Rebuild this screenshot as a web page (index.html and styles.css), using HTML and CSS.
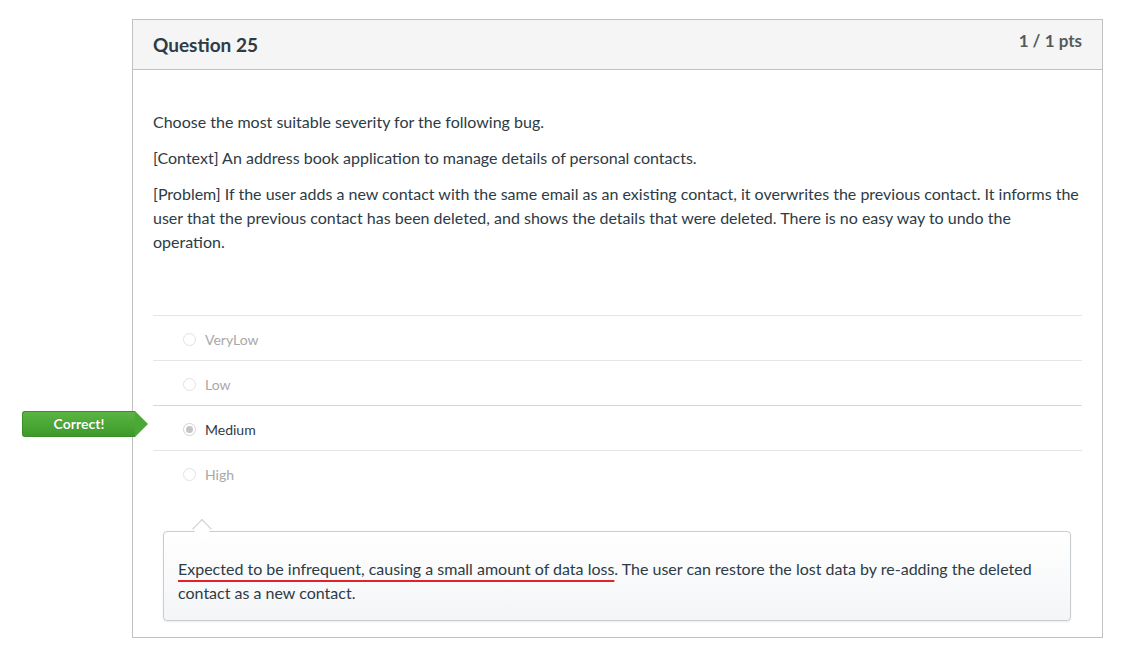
FILE: index.html
```html
<!DOCTYPE html>
<html>
<head>
<meta charset="utf-8">
<link rel="stylesheet" href="styles.css">
</head>
<body>
<div class="question">
  <div class="q-header">
    <h2 class="q-title">Question 25</h2>
    <div class="q-pts">1 / 1 pts</div>
  </div>
  <div class="q-body">
    <div class="q-text">
      <p>Choose the most suitable severity for the following bug.</p>
      <p>[Context] An address book application to manage details of personal contacts.</p>
      <p>[Problem] If the user adds a new contact with the same email as an existing contact, it overwrites the previous contact. It informs the user that the previous contact has been deleted, and shows the details that were deleted. There is no easy way to undo the operation.</p>
    </div>
    <div class="answers">
      <div class="answer"><span class="radio"></span><span class="label">VeryLow</span></div>
      <div class="answer"><span class="radio"></span><span class="label">Low</span></div>
      <div class="answer selected">
        <span class="badge">Correct!</span>
        <span class="radio checked"></span><span class="label">Medium</span>
      </div>
      <div class="answer"><span class="radio"></span><span class="label">High</span></div>
    </div>
    <div class="comment">
      <p><span class="mark">Expected to be infrequent, causing a small amount of data loss</span>. The user can restore the lost data by re-adding the deleted contact as a new contact.</p>
    </div>
  </div>
</div>
</body>
</html>
```

FILE: styles.css
```css
html, body {
  margin: 0;
  padding: 0;
  background: #fff;
}
body {
  font-family: Lato, "Open Sans", sans-serif;
  color: #2d3b45;
  padding: 19px 0 0 132px;
}
.question {
  width: 969px;
  border: 1px solid #c1c1c1;
  box-sizing: content-box;
}
.q-header {
  display: flex;
  justify-content: space-between;
  align-items: flex-start;
  background: #f5f5f5;
  border-bottom: 1px solid #c1c1c1;
  height: 49px;
  padding: 0 20px;
}
.q-title {
  margin: 0;
  padding-top: 13px;
  font-size: 19px;
  font-weight: 700;
  line-height: 24px;
  color: #2d3b45;
}
.q-pts {
  padding-top: 9px;
  font-size: 17px;
  font-weight: 700;
  line-height: 24px;
  color: #555a5e;
}
.q-body {
  padding: 40px 20px 16px 20px;
}
.q-text p {
  margin: 0 0 12px 0;
  font-size: 16px;
  line-height: 24px;
}
.answers {
  margin-top: 61px;
}
.answer {
  position: relative;
  display: flex;
  align-items: center;
  height: 42px;
  border-top: 1px solid #e5e5e5;
  padding-left: 30px;
  padding-top: 2px;
  box-sizing: content-box;
  font-size: 14px;
}
.answers .answer:nth-child(3) {
  border-top-color: #d8d8d8;
}
.radio {
  width: 11px;
  height: 11px;
  border: 1px solid #e2e2e2;
  border-radius: 50%;
  margin-right: 9px;
  box-sizing: content-box;
  background: #fff;
  position: relative;
}
.radio.checked {
  border-color: #d4d4d4;
}
.radio.checked::after {
  content: "";
  position: absolute;
  left: 2px;
  top: 2px;
  width: 7px;
  height: 7px;
  border-radius: 50%;
  background: #c4c4c4;
}
.label {
  color: #a8a8a8;
}
.selected .label {
  color: #2d3b45;
}
.badge {
  position: absolute;
  left: -131px;
  top: 5px;
  width: 113px;
  height: 26px;
  line-height: 24px;
  background: linear-gradient(#5bb443, #3d9a2a);
  border: 1px solid #3a8e29;
  border-right: none;
  border-radius: 3px 0 0 3px;
  color: #fff;
  font-size: 14px;
  font-weight: 700;
  text-align: center;
  box-sizing: border-box;
  text-shadow: 0 0 1px rgba(0,0,0,0.3);
}
.badge::after {
  content: "";
  position: absolute;
  right: -13px;
  top: -1px;
  border-top: 13px solid transparent;
  border-bottom: 13px solid transparent;
  border-left: 13px solid #4ba837;
}
.comment {
  position: relative;
  margin: 36px 11px 0 10px;
  border: 1px solid #c7cdd1;
  border-radius: 4px;
  background: linear-gradient(#ffffff, #f4f5f7);
  padding: 25px 15px 15px 14px;
  box-shadow: 0 1px 2px rgba(0,0,0,0.08);
}
.comment::before {
  content: "";
  position: absolute;
  left: 31px;
  top: -10px;
  width: 13px;
  height: 13px;
  background: #fff;
  border-left: 1px solid #c7cdd1;
  border-top: 1px solid #c7cdd1;
  transform: rotate(45deg);
}
.comment p {
  margin: 0;
  font-size: 16px;
  line-height: 24px;
}
.mark {
  text-decoration: underline;
  text-decoration-color: #e3202c;
  text-decoration-thickness: 2px;
  text-underline-offset: 5px;
}
```
